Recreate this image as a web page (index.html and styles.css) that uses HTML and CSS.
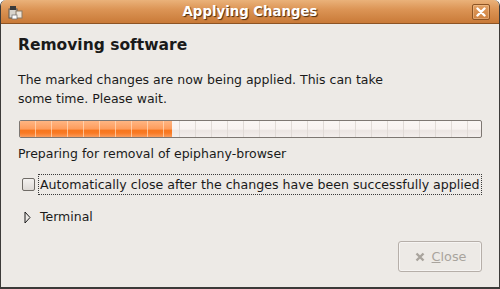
FILE: index.html
```html
<!DOCTYPE html>
<html lang="en">
  <head>
    <meta charset="UTF-8" />
    <title>Applying Changes</title>
    <link rel="stylesheet" href="styles.css">
  </head>
  <body>
    <div class="window">
      <div class="titlebar">
        <span class="app-icon">
          <svg width="18" height="18" viewBox="0 0 18 18">
            <rect x="3" y="6" width="8" height="9" fill="#d8d4cc" stroke="#5a5650" stroke-width="1" />
            <rect x="4" y="3" width="6" height="4" fill="#3a3a3a" />
            <rect x="10" y="8" width="6" height="7" fill="#efe6da" stroke="#8a7a66" stroke-width="1" />
            <rect x="6" y="12" width="5" height="4" fill="#fff" stroke="#777" stroke-width="0.8" />
          </svg>
        </span>
        <span class="title">Applying Changes</span>
        <span class="close-box">
          <svg width="10" height="10" viewBox="0 0 10 10">
            <path d="M1.5 1.5 L8.5 8.5 M8.5 1.5 L1.5 8.5" stroke="#fff" stroke-width="2.4" stroke-linecap="round" />
          </svg>
        </span>
      </div>

      <div class="content">
        <h1>Removing software</h1>
        <p class="intro">
          The marked changes are now being applied. This can take<br />
          some time. Please wait.
        </p>

        <div class="progress">
          <div class="progress-fill" style="width: 33%"></div>
        </div>
        <p class="status">Preparing for removal of epiphany-browser</p>

        <label class="check-row">
          <span class="checkbox"></span>
          <span class="check-label">Automatically close after the changes have been successfully applied</span>
        </label>

        <div class="expander">
          <svg class="expander-arrow" width="7" height="13" viewBox="0 0 7 13">
            <path d="M1 1 L6 6.5 L1 12 Z" fill="none" stroke="#1a1a1a" stroke-width="1" />
          </svg>
          <span>Terminal</span>
        </div>

        <div class="actions">
          <button class="close-btn" disabled>
            <svg width="12" height="12" viewBox="0 0 12 12">
              <path d="M2.5 2.5 L9.5 9.5 M9.5 2.5 L2.5 9.5" stroke="#a9a49d" stroke-width="2.4" />
            </svg>
            <span><u>C</u>lose</span>
          </button>
        </div>
      </div>
    </div>
  </body>
</html>
```

FILE: styles.css
```css
body {
  margin: 0;
  padding: 0;
  background-color: #ffffff;
  font-family: "DejaVu Sans", sans-serif;
  color: #1a1a1a;
}

.window {
  width: 500px;
  height: 289px;
  box-sizing: border-box;
  display: flex;
  flex-direction: column;
  background-color: #edeae6;
  border-left: 1px solid #3c3b39;
  border-right: 1px solid #3c3b39;
  border-bottom: 2px solid #3c3b39;
  border-radius: 6px 6px 0 0;
  overflow: hidden;
}

.titlebar {
  height: 23px;
  flex-shrink: 0;
  display: flex;
  align-items: center;
  background: linear-gradient(to bottom, #eab27a 0%, #dc9556 40%, #c97a38 100%);
  border-bottom: 1px solid #8d5424;
}

.app-icon {
  width: 18px;
  height: 18px;
  margin-left: 5px;
}

.title {
  flex: 1;
  text-align: center;
  color: #ffffff;
  font-weight: bold;
  font-size: 13.3px;
  text-shadow: 1px 1px 1px #4a2a0e;
  margin-left: 4px;
}

.close-box {
  width: 18px;
  height: 16px;
  margin-right: 9px;
  box-sizing: border-box;
  border: 1px solid #8d5424;
  border-radius: 2px;
  box-shadow: inset 0 0 0 1px rgba(255, 220, 180, 0.35);
  display: flex;
  align-items: center;
  justify-content: center;
}

.content {
  flex: 1;
  padding: 11px 17px 0 17px;
  display: flex;
  flex-direction: column;
}

h1 {
  margin: 0;
  font-size: 15.5px;
  font-weight: bold;
  line-height: 20px;
}

.intro {
  margin: 15px 0 0 0;
  font-size: 12.5px;
  line-height: 19px;
}

.progress {
  margin: 12px 0 0 1px;
  height: 18px;
  box-sizing: border-box;
  border: 1px solid #7d7772;
  border-radius: 2px;
  overflow: hidden;
  background-color: #f6f1ef;
  background-image:
    repeating-linear-gradient(to right, transparent 0, transparent 15px, #e1dbd7 15px, #e1dbd7 16px),
    linear-gradient(to bottom, #faf6f4 0%, #f8f3f1 50%, #ece6e3 60%, #f4efed 100%);
}

.progress-fill {
  height: 100%;
  background-image:
    repeating-linear-gradient(to right, transparent 0, transparent 15px, rgba(255, 220, 190, 0.7) 15px, rgba(255, 220, 190, 0.7) 16px),
    linear-gradient(to bottom, #ffb582 0%, #fd9c5c 50%, #f7761e 58%, #f97a24 75%, #fb9c5c 100%);
}

.status {
  margin: 6px 0 0 0;
  font-size: 12.5px;
  line-height: 20px;
}

.check-row {
  margin-top: 10px;
  display: flex;
  align-items: center;
}

.checkbox {
  width: 11px;
  height: 11px;
  margin-left: 4px;
  margin-right: 3px;
  border: 1px solid #6f6b66;
  border-radius: 2px;
  background: linear-gradient(to bottom, #f4f2f0, #dedad6);
}

.check-label {
  font-size: 12.6px;
  line-height: 19px;
  padding: 0 1px;
  border: 1px dotted #3a3a3a;
}

.expander {
  margin-top: 13px;
  display: flex;
  align-items: center;
  gap: 9px;
  padding-left: 6px;
  font-size: 12.5px;
  line-height: 18px;
}

.expander-arrow {
  flex-shrink: 0;
}

.actions {
  margin-top: 15px;
  display: flex;
  justify-content: flex-end;
}

.close-btn {
  width: 84px;
  height: 31px;
  display: flex;
  align-items: center;
  justify-content: center;
  gap: 6px;
  font-family: "DejaVu Sans", sans-serif;
  font-size: 12.8px;
  color: #a9a49d;
  background-color: #edeae6;
  border: 1px solid #b6afa9;
  border-radius: 3px;
  box-shadow: inset 0 0 0 1px #f6f4f2;
}
```
